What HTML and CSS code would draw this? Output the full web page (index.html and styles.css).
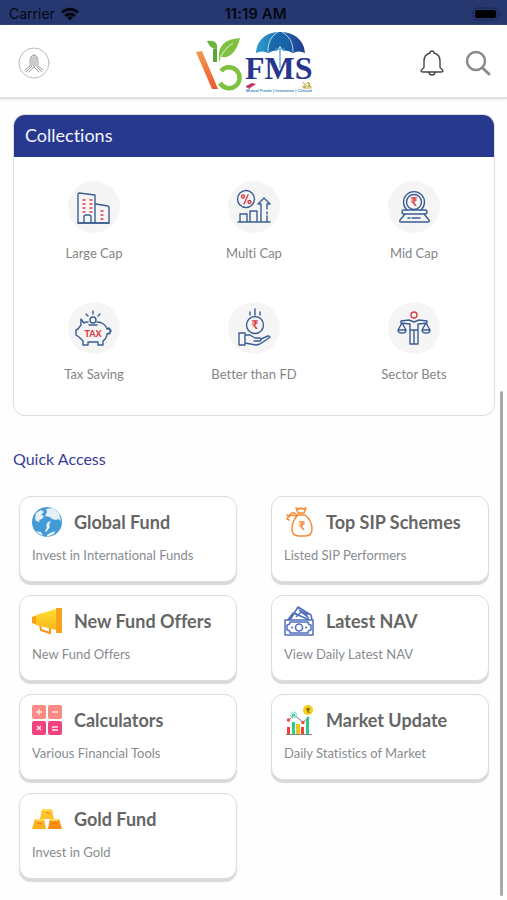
FILE: index.html
```html
<!DOCTYPE html>
<html lang="en">
<head>
  <meta charset="UTF-8" />
  <meta name="viewport" content="width=device-width, initial-scale=1" />
  <title>FMS - Home</title>
  <link rel="stylesheet" href="styles.css">
</head>
<body>

<div class="status-bar">
  <div class="carrier">
    <span>Carrier</span>
    <svg width="18" height="14" viewBox="0 0 18 14" fill="none" stroke="#05070f" stroke-width="3">
      <path d="M1 5.5a11.5 11.5 0 0 1 16 0M4 9a7.5 7.5 0 0 1 10 0" />
      <path d="M9 13.5l-3-3a4.5 4.5 0 0 1 6 0z" fill="#05070f" stroke="none" />
    </svg>
  </div>
  <time class="clock">11:19 AM</time>
  <div class="battery">
    <svg width="30" height="14" viewBox="0 0 30 14">
      <rect x="1" y="1" width="25" height="12" rx="4" fill="none" stroke="#1a2553" />
      <rect x="3" y="3" width="21" height="8" rx="2" fill="#000" />
      <path d="M28 5q2 2 0 4z" fill="#1a2553" />
    </svg>
  </div>
</div>

<header class="header">
  <button class="icon-btn" aria-label="Profile">
    <svg width="32" height="32" viewBox="0 0 32 32" fill="none" stroke="#999" stroke-linecap="round" stroke-linejoin="round">
      <circle cx="16" cy="16" r="15" stroke="#bbb" />
      <path d="M16 8v12M16 8c-3 0-4 3-4 8v3l-5 4M16 8c3 0 4 3 4 8v3l5 4M14 10v9l-6 6M18 10v9l6 6M16 20l-5 5M16 20l5 5" />
    </svg>
  </button>

  <a class="logo" href="#" aria-label="FMS">
    <svg width="120" height="64" viewBox="0 0 120 64">
      <defs>
        <linearGradient id="slash" x1="0" y1="0" x2="0" y2="1">
          <stop offset="0" stop-color="#f29a4a" />
          <stop offset="1" stop-color="#ec5a33" />
        </linearGradient>
        <linearGradient id="canopy">
          <stop offset="0" stop-color="#2e9ccc" />
          <stop offset="0.5" stop-color="#1d6fb0" />
          <stop offset="1" stop-color="#20398c" />
        </linearGradient>
      </defs>
      <path d="M1 21l6-1 16 38h-6z" fill="url(#slash)" />
      <path d="M18 18l4-1v14h-4z" fill="#58a63a" />
      <path d="M26 40a10.500 10.500 0 1 1-1 12" fill="none" stroke="#7fc241" stroke-width="4.500" />
      <path d="M24 26c-1-11 6-18 21-19-3 13-10 21-19 19l-2 5z" fill="#7fc241" />
      <path d="M25 27q5-10 13-15" fill="none" stroke="#fff" stroke-width=".8" />
      <path d="M12 10c7-1 11 1 10 8-5 0-8-3-10-8z" fill="#6db33f" />
      <path d="M61 22C62 8 72 1 85 1s24 7 25 21q-6-3-12 0-6-4-13-2-7-2-12 2-6-3-12 0z" fill="url(#canopy)" />
      <path d="M85 1c-7 4-11 10-12 21 4-2 8-3 12-2 5-1 9 0 13 2-1-11-6-17-13-21z" fill="#1762a5" opacity=".7" />
      <path d="M83 1c-7 4-10 10-10 20M87 1c7 4 11 10 11 20" fill="none" stroke="#fff" stroke-width=".7" />
      <path d="M85 15l5 8h-10z" fill="#fff" />
      <text class="logo-name" x="50" y="48">FMS</text>
      <path d="M85 17v20M80 18h10" fill="none" stroke="#4b9bd0" stroke-width="1.200" />
      <path d="M51 55l6-3 4 1-6 4z" fill="#c6325e" />
      <path d="M51 55l4 2v1l-4-2z" fill="#8f2450" />
      <path d="M108 51l2 3 3-3 2 2M108 55h8v2h-8z" fill="none" stroke="#e0a338" />
      <path d="M110 55v2M114 52v4" stroke="#82b64a" stroke-width="1.500" />
      <text class="logo-tag" x="51" y="61">Mutual Funds | Insurance | Clinical</text>
    </svg>
  </a>

  <div class="actions">
    <button class="icon-btn" aria-label="Notifications">
      <svg width="26" height="28" viewBox="0 0 26 28" fill="none" stroke="#444" stroke-width="1.400" stroke-linejoin="round">
        <path d="M11 4a2 2 0 1 1 4 0c4 1 6 4 6 8v6c0 2 3 2 3 4 0 1-1 1-2 1H4c-1 0-2 0-2-1 0-2 3-2 3-4v-6c0-4 2-7 6-8z" />
        <path d="M10 23c0 4 6 4 6 0" />
      </svg>
    </button>
    <button class="icon-btn" aria-label="Search">
      <svg width="26" height="28" viewBox="0 0 26 28" fill="none" stroke="#888b8d" stroke-width="2.500" stroke-linecap="round">
        <circle cx="11" cy="12" r="9" />
        <path d="M17.500 19l6.500 6" stroke-width="3" />
      </svg>
    </button>
  </div>
</header>

<main>
  <section class="collections">
    <h2>Collections</h2>
    <div class="collection-grid">
      <a class="collection" href="#">
        <svg class="round" viewBox="0 0 52 52">
          <path d="M10 42V13l1-1 16 2v28zM28 23l12 2 1 1v16H28" />
          <path d="M16 42v-6q0-2 2-2h3q2 0 2 2v6M10 42h31" />
          <path class="red" d="M15 19h2M22 19h2M15 23h2M22 23h2M15 27h2M22 27h2M15 31h2M22 31h2M33 30h2M33 34h2M33 38h2" />
        </svg>
        <span>Large Cap</span>
      </a>
      <a class="collection" href="#">
        <svg class="round" viewBox="0 0 52 52">
          <circle cx="18" cy="18" r="8.500" />
          <path d="M10 41h32M12 41v-8h7v8M22 41V30h7v11M33 41V23h-3l6-6 6 6h-3v5M39 31v2M39 35v6" />
          <g class="red"><circle cx="15" cy="15.500" r="1.500" /><circle cx="21.500" cy="21" r="1.500" /><path d="M20 14l-4 9" /></g>
        </svg>
        <span>Multi Cap</span>
      </a>
      <a class="collection" href="#">
        <svg class="round" viewBox="0 0 52 52">
          <path d="M19 29a10.500 10.500 0 1 1 14 0" />
          <circle cx="26" cy="21" r="7.500" />
          <path d="M16 29h21q2 0 2 2t-2 2H16q-2 0-2-2t2-2zM17 33h19l5 6q1 2-1 2H13q-2 0-1-2zM20 37h2M24 37h8" />
          <text class="rupee" x="26" y="25">₹</text>
        </svg>
        <span>Mid Cap</span>
      </a>
      <a class="collection" href="#">
        <svg class="round" viewBox="0 0 52 52">
          <path d="M20 20q-3 0-4 1l-3-4v6l-3 4-2 1v5l3 2 4 4v4h5v-3h10v3h5v-4q4-3 4-7l3-1v-4h-3c-1-4-5-7-10-7M39 27l2-1 2 3-2 3" />
          <circle cx="25" cy="18" r="3" />
          <path d="M21 23h8M25 12V9M20 14l-2-2M30 14l2-2" />
          <text class="tax" x="25" y="35">TAX</text>
        </svg>
        <span>Tax Saving</span>
      </a>
      <a class="collection" href="#">
        <svg class="round" viewBox="0 0 52 52">
          <circle cx="27" cy="23" r="8.500" />
          <path d="M27 7v6M22 10v3M32 10v3M11 31h6v12h-6zM17 33h5l5 3h5q2 2 0 3h-6M33 37l7-3q3 0 1 2l-9 6-4 1-11-2" />
          <text class="rupee" x="27" y="27">₹</text>
        </svg>
        <span>Better than FD</span>
      </a>
      <a class="collection" href="#">
        <svg class="round" viewBox="0 0 52 52">
          <circle class="red" cx="26" cy="13" r="3" />
          <path d="M13 19l8-1 5 2 5-2 8 1v2l-9 1v20h-8V22l-9-1zM26 28v14M22 28h8M14 21l-4 7h8zM38 21l-4 7h8zM10 28q0 3 4 3t4-3M34 28q0 3 4 3t4-3" />
        </svg>
        <span>Sector Bets</span>
      </a>
    </div>
  </section>

  <h2 class="quick-title">Quick Access</h2>
  <section class="quick-grid">
    <a class="quick-card" href="#">
      <div class="quick-head">
        <svg viewBox="0 0 30 30">
          <circle cx="15" cy="15" r="15" fill="#429bd6" />
          <path d="M4 6l5-3 3 2-3 3 3 1-2 3-3 1 1 2-4-1-1-3zM14 2l7-1 6 5 2 8-3-2-2 1-4-1-2-2-5-1 2-4zM16 15l3-1-2 4 1 2-4 5-1-1 2-4-1-2zM4 24l5 1 2 4-4-2zM18 26l5-2-1 3-7 3v-2z" fill="#e4eff6" />
        </svg>
        <h3>Global Fund</h3>
      </div>
      <p>Invest in International Funds</p>
    </a>
    <a class="quick-card" href="#">
      <div class="quick-head">
        <svg viewBox="0 0 30 30" fill="none" stroke="#f58a2e" stroke-width="1.500" stroke-linecap="round" stroke-linejoin="round">
          <path d="M14 8h7c5 4 7 10 7 14 0 5-3 7-7 7h-6c-5 0-7-2-7-7 0-4 2-10 6-14zM14 6l-2-5 3 1 2-1 2 1 3-1-2 5zM13 8C10 4 6 6 5 9M12 9c-4-2-8 0-9 3M5 9l-2-1M3 12l2 1" />
          <text class="bag-rupee" x="18" y="23">₹</text>
        </svg>
        <h3>Top SIP Schemes</h3>
      </div>
      <p>Listed SIP Performers</p>
    </a>
    <a class="quick-card" href="#">
      <div class="quick-head">
        <svg viewBox="0 0 30 30">
          <defs>
            <linearGradient id="horn" x1="0" y1="0" x2="0" y2="1">
              <stop offset="0" stop-color="#ffdf2e" />
              <stop offset="1" stop-color="#fbb61c" />
            </linearGradient>
          </defs>
          <path d="M8 19l1 5 9 3v-6" fill="none" stroke="#f6951d" stroke-width="2" />
          <path d="M0 11l5-2v10l-5-2z" fill="#f9a11b" />
          <path d="M4 9l20-6v21L4 19z" fill="url(#horn)" />
          <path d="M24 2h6v25h-6z" fill="#f9a11b" />
        </svg>
        <h3>New Fund Offers</h3>
      </div>
      <p>New Fund Offers</p>
    </a>
    <a class="quick-card" href="#">
      <div class="quick-head">
        <svg viewBox="0 0 30 30" fill="none" stroke="#526fbd" stroke-width="1.500" stroke-linejoin="round">
          <path d="M1 14h28v15H1zM6 14l8-13 13 8 1 5M4 14l5-7 17 7M10 7l3 1M15 4l9 5M12 11l5-5 8 6" />
          <path d="M3 19q3 0 3-3h18q0 3 3 3v5q-3 0-3 3H6q0-3-3-3z" />
          <circle cx="15" cy="21.500" r="3.500" />
          <path d="M7 21.500h2M21 21.500h2" />
        </svg>
        <h3>Latest NAV</h3>
      </div>
      <p>View Daily Latest NAV</p>
    </a>
    <a class="quick-card" href="#">
      <div class="quick-head">
        <svg viewBox="0 0 30 30">
          <g fill="#fa8a84"><rect width="14" height="14" rx="2" /><rect x="16" width="14" height="14" rx="2" /></g>
          <g fill="#f0447f"><rect y="16" width="14" height="14" rx="2" /><rect x="16" y="16" width="14" height="14" rx="2" /></g>
          <path d="M4 7h6M7 4v6M20 7h6M5 21l4 4M9 21l-4 4M20 22h6M20 25h6" stroke="#ffe3e3" stroke-width="1.500" />
        </svg>
        <h3>Calculators</h3>
      </div>
      <p>Various Financial Tools</p>
    </a>
    <a class="quick-card" href="#">
      <div class="quick-head">
        <svg viewBox="0 0 30 30">
          <path d="M3 22h3v7H3zM17 22h3v7h-3z" fill="#ed4438" />
          <path d="M8 17h3v12H8zM22 14h3v15h-3z" fill="#2bcb8b" />
          <path d="M12 19h4v10h-4z" fill="#f1c51f" />
          <path d="M2 29.500h26" stroke="#8b7e80" />
          <path d="M5 15l5-5 9 7 5-4" fill="none" stroke="#6d829a" />
          <circle cx="9.500" cy="10" r="3" fill="none" stroke="#8bdcc3" />
          <circle cx="9.500" cy="10" r="1.500" fill="#2bcb8b" />
          <circle cx="24" cy="13" r="1.500" fill="#2bcb8b" />
          <g fill="#ed4438"><circle cx="4.500" cy="15" r="1.700" /><circle cx="19" cy="17.500" r="1.700" /></g>
          <circle cx="24" cy="5" r="5" fill="#f5cd17" />
          <text class="coin-rupee" x="24" y="8">₹</text>
        </svg>
        <h3>Market Update</h3>
      </div>
      <p>Daily Statistics of Market</p>
    </a>
    <a class="quick-card" href="#">
      <div class="quick-head">
        <svg viewBox="0 0 30 30">
          <path d="M10 5h10l2 10H8z" fill="#fdc42d" />
          <path d="M3 15h9l2 10H0z" fill="#fbb122" />
          <path d="M18 15h9l3 10H16z" fill="#f98e12" />
          <path d="M10 5h10l-1 2h-8zM3 15h9l-1 2H4zM18 15h9l-1 2h-7z" fill="#ffdb58" />
          <path d="M14 8l4 2M5 19l5 1M20 19l5 1" stroke="#ef7b1a" />
        </svg>
        <h3>Gold Fund</h3>
      </div>
      <p>Invest in Gold</p>
    </a>
  </section>
</main>

<div class="scroll-thumb"></div>

</body>
</html>
```

FILE: styles.css
```css
* { box-sizing: border-box; }
body {
  font-family: Lato, "DejaVu Sans", sans-serif; font-variant-ligatures: none;
  background: #fefefe; margin: 0;
}
h2, h3, p { margin: 0; }
a { color: inherit; text-decoration: none; }
svg { display: block; }

.status-bar {
  display: grid; grid-template-columns: 1fr auto 1fr; align-items: center;
  height: 25px; padding: 2px 5px 0 9px;
  background: #27376f; color: #05070f;
  font-family: Inter, sans-serif; font-size: 14px;
}
.carrier { display: flex; align-items: center; gap: 6px; }
.clock { font-size: 15px; font-weight: 600; }
.battery { justify-self: end; }

.header {
  display: grid; grid-template-columns: 1fr auto 1fr; align-items: center;
  height: 74px; padding: 4px 16px 0 18px;
  background: #fff; border-bottom: 2px solid #e0e0e0;
  box-shadow: 0 1px 2px #eee;
}
.icon-btn { justify-self: start; padding: 0; border: none; background: none; cursor: pointer; }
.actions { display: flex; justify-content: flex-end; gap: 20px; }
.logo-name { font: bold 32px "Liberation Serif", serif; fill: #27368d; }
.logo-tag { font: bold 4px "Liberation Sans", sans-serif; fill: #4388b8; }

main { padding: 15px 12px 20px 13px; }

.collections { background: #fff; border: 1px solid #ddd; border-radius: 12px; overflow: hidden; }
.collections h2 {
  padding: 0 11px 2px; background: #27388f; color: #f3f5ff;
  font-size: 18px; font-weight: 400; line-height: 40px;
}
.collection-grid {
  display: grid; grid-template-columns: repeat(3, 1fr); row-gap: 38px;
  padding: 24px 0 30px;
}
.collection {
  display: flex; flex-direction: column; align-items: center; gap: 9px;
  color: #858585; font-size: 13px; line-height: 22px;
}
.round {
  width: 52px; height: 52px; border-radius: 50%; background: #f5f5f5;
  fill: none; stroke: #3b5d91; stroke-width: 1.4; stroke-linecap: round; stroke-linejoin: round;
}
.round .red { stroke: #db3d47; }
.rupee, .tax { fill: #db3d47; stroke: none; text-anchor: middle; font-weight: 700; }
.rupee { font-size: 12px; }
.tax { font-size: 9px; font-weight: 900; }
.bag-rupee { fill: #f58a2e; stroke: none; font-size: 12px; font-weight: 700; text-anchor: middle; }
.coin-rupee { fill: #5c4a10; font-size: 7px; font-weight: 700; text-anchor: middle; }

.quick-title { margin: 32px 0 26px; color: #373d96; font-size: 16px; font-weight: 400; line-height: 22px; }
.quick-grid { display: grid; grid-template-columns: 1fr 1fr; gap: 13px 34px; padding: 0 6px; }
.quick-card {
  height: 86px; padding: 10px 12px;
  background: #fff; border: 1px solid #ddd; border-radius: 12px;
  box-shadow: 0 3px 1px #d9d9d9;
}
.quick-head { display: flex; align-items: center; gap: 12px; }
.quick-head svg { flex: none; width: 30px; height: 30px; }
.quick-head h3 { color: #666; font-size: 18px; font-weight: 700; line-height: 30px; white-space: nowrap; }
.quick-card p { margin-top: 8px; color: #888c8f; font-size: 13px; line-height: 20px; white-space: nowrap; }

.scroll-thumb { position: fixed; top: 391px; right: 4px; bottom: 4px; width: 3px; border-radius: 2px; background: #aaa; }
```
